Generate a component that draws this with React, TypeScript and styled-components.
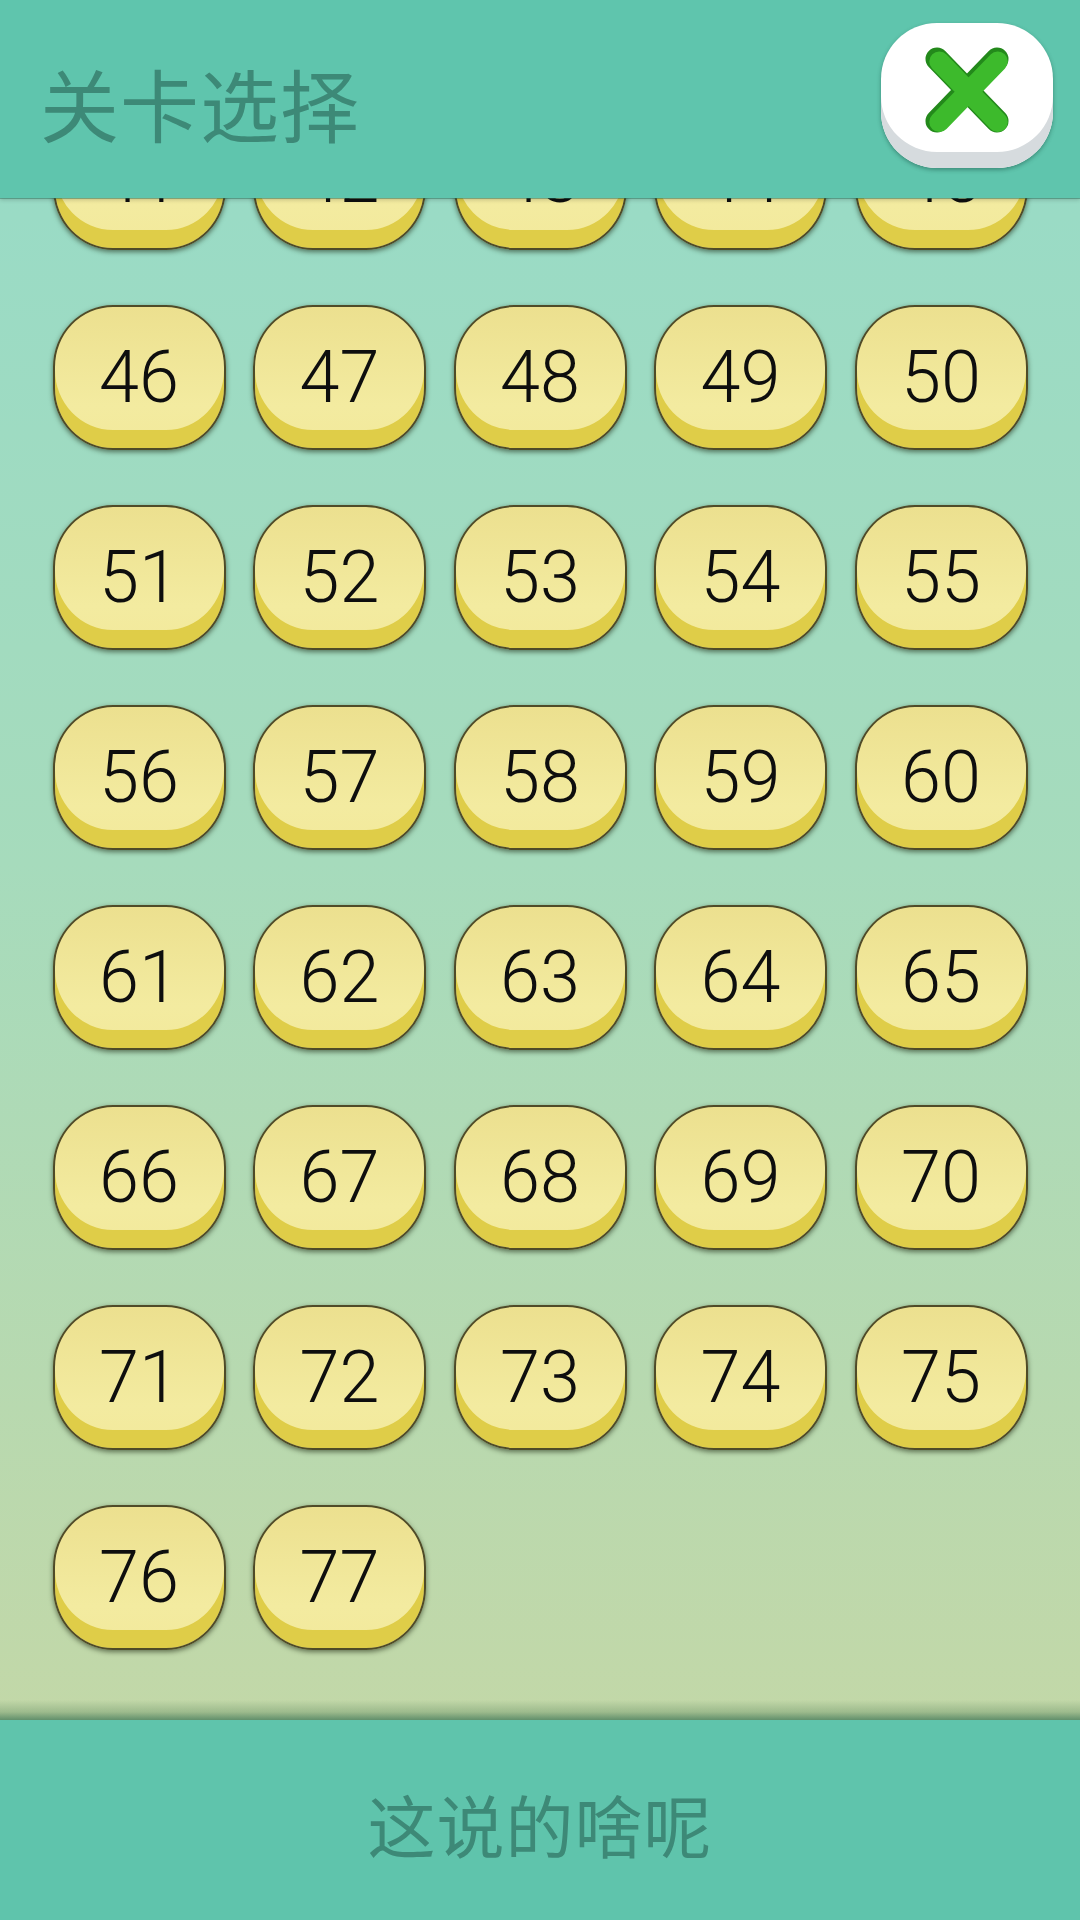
import React, { useLayoutEffect, useRef } from "react";
import styled, { createGlobalStyle } from "styled-components";

const GlobalStyle = createGlobalStyle`
  html, body {
    margin: 0;
    padding: 0;
    width: 1080px;
    height: 1920px;
    overflow: hidden;
  }
  #root {
    width: 1080px;
    height: 1920px;
  }
`;

const Screen = styled.div`
  width: 1080px;
  height: 1920px;
  display: flex;
  flex-direction: column;
  font-family: "Noto Sans CJK SC", "Noto Sans", sans-serif;
  background: linear-gradient(180deg, #96dbc8 0%, #a6dbbc 45%, #c9d7a3 100%);
`;

const Header = styled.header`
  position: relative;
  z-index: 2;
  height: 198px;
  flex: none;
  box-sizing: border-box;
  padding: 0 27px 0 40px;
  display: flex;
  align-items: center;
  justify-content: space-between;
  background: #5fc5ad;
  box-shadow: 0 1px 0 rgba(40, 110, 90, 0.45), 0 2px 4px rgba(0, 0, 0, 0.18);
`;

const Title = styled.h1`
  margin: 0;
  padding-top: 6px;
  font-family: "Noto Sans CJK SC", sans-serif;
  font-weight: 400;
  font-size: 79px;
  letter-spacing: 1px;
  color: #3d8977;
  line-height: 1;
`;

const CloseButton = styled.button`
  width: 172px;
  height: 145px;
  margin-bottom: 8px;
  padding: 0 0 10px 0;
  border: none;
  border-radius: 56px;
  background: #ffffff;
  box-shadow: inset 0 -16px 0 #d6dbde, 0 2px 4px rgba(20, 70, 60, 0.45);
  display: flex;
  align-items: center;
  justify-content: center;
  cursor: pointer;
`;

const Scroller = styled.main`
  flex: 1;
  overflow-y: auto;
  scrollbar-width: none;
  &::-webkit-scrollbar {
    display: none;
  }
`;

const Grid = styled.div`
  display: grid;
  grid-template-columns: repeat(5, 173px);
  column-gap: 27.5px;
  row-gap: 55px;
  justify-content: center;
  padding: 40px 0 70px;
`;

const Level = styled.button`
  width: 173px;
  height: 145px;
  padding: 0;
  box-sizing: border-box;
  border: 2px solid #4f4b28;
  border-radius: 60px / 62px;
  background: linear-gradient(180deg, #ece08f 0%, #f3eba0 70%, #f2e99b 100%);
  box-shadow: inset 0 -18px 0 #dfcd48, 0 2px 5px rgba(20, 30, 10, 0.55);
  font-family: "Roboto", "Liberation Sans", Arial, sans-serif;
  font-size: 72px;
  font-weight: 300;
  color: #0e0e0e;
  line-height: 1;
  display: flex;
  align-items: center;
  justify-content: center;
  cursor: pointer;
`;

const Footer = styled.footer`
  position: relative;
  height: 200px;
  flex: none;
  background: #5fc4ac;
  display: flex;
  align-items: center;
  justify-content: center;
  &::before {
    content: "";
    position: absolute;
    left: 0;
    right: 0;
    top: -20px;
    height: 20px;
    background: linear-gradient(180deg, rgba(60, 110, 70, 0) 0%, rgba(60, 110, 70, 0.28) 60%, rgba(45, 105, 75, 0.65) 100%);
    pointer-events: none;
  }
`;

const FooterText = styled.span`
  font-family: "Noto Sans CJK SC", sans-serif;
  font-size: 68px;
  font-weight: 400;
  color: #3d8977;
  letter-spacing: 1px;
  line-height: 1;
  margin-top: 8px;
`;

const XIcon = () => (
  <svg width="84" height="86" viewBox="0 0 84 86">
    <g strokeLinecap="round" fill="none">
      <path d="M12 12 L72 74 M72 12 L12 74" stroke="#23891b" strokeWidth="23" />
      <path d="M13.5 13.5 L72 74 M72 13.5 L13.5 74" stroke="#3dba2c" strokeWidth="20" transform="translate(0.8 1)" />
    </g>
  </svg>
);

export default function App() {
  const scrollRef = useRef<HTMLElement | null>(null);
  useLayoutEffect(() => {
    const el = scrollRef.current;
    if (el) el.scrollTop = el.scrollHeight;
  }, []);

  const levels = Array.from({ length: 77 }, (_, i) => i + 1);

  return (
    <>
      <GlobalStyle />
      <Screen>
        <Header>
          <Title>关卡选择</Title>
          <CloseButton aria-label="关闭">
            <XIcon />
          </CloseButton>
        </Header>
        <Scroller ref={scrollRef}>
          <Grid>
            {levels.map((n) => (
              <Level key={n}>{n}</Level>
            ))}
          </Grid>
        </Scroller>
        <Footer>
          <FooterText>这说的啥呢</FooterText>
        </Footer>
      </Screen>
    </>
  );
}
